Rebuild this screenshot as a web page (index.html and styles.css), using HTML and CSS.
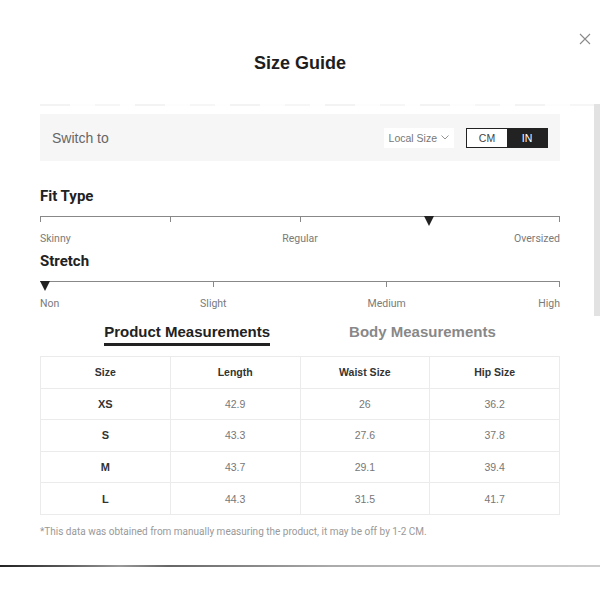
FILE: index.html
```html
<!DOCTYPE html>
<html>
<head>
<meta charset="utf-8">
<link rel="stylesheet" href="styles.css">
</head>
<body>
<div class="modal">
  <button class="close" aria-label="Close">
    <svg width="12" height="12" viewBox="0 0 12 12"><path d="M1 1L11 11M11 1L1 11" stroke="#8a8a8a" stroke-width="1.1" fill="none"/></svg>
  </button>
  <header class="head"><h1 class="title">Size Guide</h1></header>
  <div class="fade-line"></div>
  <div class="scrollbar"></div>
  <main class="content">
    <section class="switch-box">
      <span class="switch-label">Switch to</span>
      <div class="switch-controls">
        <span class="local">Local Size
          <svg width="8" height="5" viewBox="0 0 8 5"><path d="M0.5 0.5L4 4L7.5 0.5" stroke="#888" stroke-width="0.9" fill="none"/></svg>
        </span>
        <div class="unit">
          <span class="unit-btn">CM</span>
          <span class="unit-btn active">IN</span>
        </div>
      </div>
    </section>

    <h2 class="sec-title fit-title">Fit Type</h2>
    <div class="slider">
      <div class="ticks"><i></i><i></i><i></i><i class="hid"></i><i></i></div>
      <span class="marker" style="left: 74.8%"></span>
    </div>
    <div class="labels three"><span>Skinny</span><span>Regular</span><span>Oversized</span></div>

    <h2 class="sec-title stretch-title">Stretch</h2>
    <div class="slider">
      <div class="ticks"><i class="hid"></i><i></i><i></i><i></i></div>
      <span class="marker start" style="left: 0%"></span>
    </div>
    <div class="labels four"><span>Non</span><span>Slight</span><span>Medium</span><span>High</span></div>

    <nav class="tabs">
      <span class="tab active">Product Measurements</span>
      <span class="tab">Body Measurements</span>
    </nav>

    <table class="sizes">
      <thead>
        <tr><th>Size</th><th>Length</th><th class="split">Waist Size</th><th>Hip Size</th></tr>
      </thead>
      <tbody>
        <tr><th>XS</th><td>42.9</td><td class="split">26</td><td>36.2</td></tr>
        <tr><th>S</th><td>43.3</td><td class="split">27.6</td><td>37.8</td></tr>
        <tr><th>M</th><td>43.7</td><td class="split">29.1</td><td>39.4</td></tr>
        <tr><th>L</th><td>44.3</td><td class="split">31.5</td><td>41.7</td></tr>
      </tbody>
    </table>

    <p class="note">*This data was obtained from manually measuring the product, it may be off by 1-2 CM.</p>
  </main>
  <div class="bottom-line"></div>
</div>
</body>
</html>
```

FILE: styles.css
```css
* { box-sizing: border-box; }
html, body { margin: 0; padding: 0; background: #fff; }
body { width: 600px; height: 600px; overflow: hidden; font-family: "Liberation Sans", Arial, sans-serif; color: #222; }

.modal { position: relative; width: 600px; height: 600px; }

.close {
  position: absolute; top: 32px; right: 8px;
  width: 14px; height: 14px; padding: 0; border: 0; background: none;
  display: flex; align-items: center; justify-content: center;
}

.head { height: 104px; padding-top: 53px; }
.title { margin: 0; text-align: center; font-size: 18px; line-height: 20px; font-weight: 700; color: #1e1e1e; }

.fade-line {
  height: 2px; margin: 0 6px 0 40px;
  background: repeating-linear-gradient(90deg, #f3f3f3 0 30px, #fdfdfd 30px 55px, #f6f6f6 55px 80px, #fefefe 80px 95px);
}

.scrollbar {
  position: absolute; top: 104px; right: 0; width: 6px; height: 212px; background: #e2e2e2;
}

.content { padding: 8px 40px 0; }

.switch-box {
  height: 47px; background: #f6f6f6;
  display: flex; align-items: center; justify-content: space-between;
  padding: 0 12px 0 12px;
}
.switch-label { font-size: 14px; color: #666; }
.switch-controls { display: flex; align-items: center; gap: 12px; }
.local {
  display: flex; align-items: center; gap: 4px;
  height: 20px; padding: 0 5px; background: #fff;
  font-size: 10.5px; color: #777;
}
.unit { display: flex; height: 20px; border: 1px solid #222; }
.unit-btn {
  width: 40px; display: flex; align-items: center; justify-content: center;
  font-size: 10.5px; color: #444; background: #fff;
}
.unit-btn.active { background: #222; color: #fff; }

.sec-title {
  margin: 0; font-family: Roboto, "Liberation Sans", sans-serif;
  font-size: 15px; line-height: 20px; font-weight: 700; color: #222;
}
.fit-title { margin-top: 25px; }
.stretch-title { margin-top: 5px; }

.slider { position: relative; height: 18px; padding-top: 10px; }
.ticks {
  height: 6px; border-top: 1px solid #888;
  display: flex; justify-content: space-between;
}
.ticks i { display: block; width: 1px; height: 5px; background: #888; }
.ticks i.hid { background: transparent; }
.marker {
  position: absolute; top: 10px; margin-left: -5px;
  width: 0; height: 0;
  border-left: 5.5px solid transparent; border-right: 5.5px solid transparent;
  border-top: 10px solid #222;
}
.marker.start { margin-left: 0; }

.labels {
  display: grid; height: 14px; margin-top: 8px;
  font-family: Roboto, "Liberation Sans", sans-serif; font-size: 10.5px; line-height: 14px; color: #7a7a7a;
}
.labels.three { grid-template-columns: 1fr 2fr 1fr; }
.labels.four { grid-template-columns: 1fr 2fr 2fr 1fr; }
.labels span { text-align: center; }
.labels span:first-child { text-align: left; }
.labels span:last-child { text-align: right; }

.tabs {
  display: flex; justify-content: center; gap: 79px;
  margin-top: 11px; height: 34px;
}
.tab {
  font-size: 15px; font-weight: 700; color: #888; line-height: 20px; height: 21px;
}
.tab.active { color: #222; border-bottom: 3px solid #222; height: 24px; }

.sizes {
  width: 520px; border-collapse: collapse; table-layout: fixed;
  font-size: 10.5px;
}
.sizes th, .sizes td {
  height: 31.6px; padding: 0; text-align: center; border: 1px solid #ebebeb;
}
.sizes thead th { font-weight: 700; color: #333; }
.sizes tbody th { font-weight: 700; color: #333; font-size: 11px; }
.sizes td { color: #777; }
.sizes .split { border-left: 1px solid #d9d9d9; }

.note {
  margin: 11px 0 0; font-family: Roboto, "Liberation Sans", sans-serif;
  font-size: 10px; line-height: 12px; color: #999;
}

.bottom-line {
  position: absolute; left: 0; right: 0; top: 565px; height: 2px;
  background: linear-gradient(90deg, #222 0%, #555 10%, #999 20%, #666 28%, #888 42%, #aaa 55%, #bbb 70%, #ccc 100%);
}
```
